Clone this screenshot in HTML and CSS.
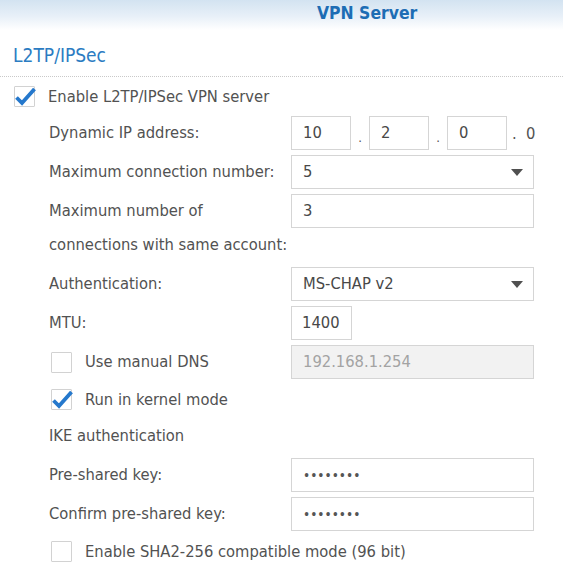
FILE: index.html
```html
<!DOCTYPE html>
<html>
<head>
<meta charset="utf-8">
<title>VPN Server</title>
<link rel="stylesheet" href="styles.css">
</head>
<body>
<div class="header">VPN Server</div>
<div class="section-title">L2TP/IPSec</div>
<div class="form">
  <div class="row row-check row-top">
    <span class="checkbox checked"><svg viewBox="0 0 21 21" class="tick"><path d="M2.5 11.5 L8 17 L20.5 3" /></svg></span>
    <span class="check-label">Enable L2TP/IPSec VPN server</span>
  </div>

  <div class="row row-field">
    <div class="label">Dynamic IP address:</div>
    <div class="ip">
      <div class="box box-ip">10</div><span class="ip-dot">.</span>
      <div class="box box-ip">2</div><span class="ip-dot">.</span>
      <div class="box box-ip">0</div><span class="ip-tail">.&nbsp;&nbsp;0</span>
    </div>
  </div>

  <div class="row row-field">
    <div class="label">Maximum connection number:</div>
    <div class="box box-wide select"><span>5</span><span class="arrow"></span></div>
  </div>

  <div class="row row-field row-tall">
    <div class="label label-wrap">Maximum number of<br>connections with same account:</div>
    <div class="box box-wide">3</div>
  </div>

  <div class="row row-field">
    <div class="label">Authentication:</div>
    <div class="box box-wide select"><span>MS-CHAP v2</span><span class="arrow"></span></div>
  </div>

  <div class="row row-field">
    <div class="label">MTU:</div>
    <div class="box box-mtu">1400</div>
  </div>

  <div class="row row-field">
    <div class="label label-check">
      <span class="checkbox"></span>
      <span class="check-label">Use manual DNS</span>
    </div>
    <div class="box box-wide disabled">192.168.1.254</div>
  </div>

  <div class="row row-check row-sub">
    <span class="checkbox checked"><svg viewBox="0 0 21 21" class="tick"><path d="M2.5 11.5 L8 17 L20.5 3" /></svg></span>
    <span class="check-label">Run in kernel mode</span>
  </div>

  <div class="row row-field">
    <div class="label">IKE authentication</div>
  </div>

  <div class="row row-field">
    <div class="label">Pre-shared key:</div>
    <div class="box box-wide"><span class="dots">••••••••</span></div>
  </div>

  <div class="row row-field">
    <div class="label">Confirm pre-shared key:</div>
    <div class="box box-wide"><span class="dots">••••••••</span></div>
  </div>

  <div class="row row-check row-sub">
    <span class="checkbox"></span>
    <span class="check-label">Enable SHA2-256 compatible mode (96 bit)</span>
  </div>
</div>
</body>
</html>
```
FILE: styles.css
```css
html, body {
  margin: 0;
  padding: 0;
  background: #ffffff;
}

body {
  width: 563px;
  height: 580px;
  overflow: hidden;
  font-family: "DejaVu Sans Condensed", "DejaVu Sans", sans-serif;
  font-stretch: condensed;
  font-size: 16.4px;
  color: #525252;
}

.header {
  height: 30px;
  box-sizing: border-box;
  padding-left: 317px;
  padding-top: 3px;
  line-height: 20px;
  font-weight: bold;
  font-size: 17.4px;
  color: #1d6db4;
  background: linear-gradient(to bottom, #d3e3f1 0%, #e8f0f8 55%, #ffffff 100%);
}

.section-title {
  height: 47px;
  box-sizing: border-box;
  padding-left: 13px;
  padding-top: 13px;
  line-height: 24px;
  font-size: 19px;
  color: #2b7cc2;
  border-bottom: 1px dotted #c9c9c9;
}

.form {
  display: flex;
  flex-direction: column;
  gap: 5px;
  padding-top: 4px;
}

.row {
  display: flex;
  align-items: center;
}

.row-check {
  height: 30px;
}

.row-top {
  padding-left: 14px;
}

.row-sub {
  padding-left: 51px;
}

.row-field {
  height: 34px;
  padding-left: 49px;
}

.row-tall {
  height: 68px;
  align-items: flex-start;
}

.label {
  width: 242px;
  flex: none;
  line-height: 34px;
  white-space: nowrap;
}

.label-check {
  display: flex;
  align-items: center;
  padding-left: 2px;
  box-sizing: border-box;
}

.checkbox {
  position: relative;
  flex: none;
  width: 21px;
  height: 21px;
  box-sizing: border-box;
  border: 1px solid #d2d2d2;
  border-radius: 1px;
  background: #ffffff;
}

.tick {
  position: absolute;
  left: -1px;
  top: -1px;
  width: 21px;
  height: 21px;
  overflow: visible;
}

.tick path {
  fill: none;
  stroke: #2578cc;
  stroke-width: 3.8;
  stroke-linecap: butt;
  stroke-linejoin: miter;
}

.check-label {
  margin-left: 13px;
  white-space: nowrap;
}

.box {
  height: 34px;
  box-sizing: border-box;
  border: 1px solid #d5d5d5;
  background: #ffffff;
  padding-left: 11px;
  line-height: 32px;
  color: #484848;
  white-space: nowrap;
}

.box-wide {
  width: 243px;
}

.box-mtu {
  width: 61px;
  padding-left: 10px;
}

.ip {
  display: flex;
  align-items: center;
}

.box-ip {
  width: 60px;
}

.ip-dot {
  width: 18px;
  text-align: center;
  padding-top: 8px;
  font-size: 13px;
}

.ip-tail {
  padding-left: 5px;
}

.select {
  display: flex;
  align-items: center;
  justify-content: space-between;
  padding-right: 10px;
}

.arrow {
  width: 0;
  height: 0;
  border-left: 6px solid transparent;
  border-right: 6px solid transparent;
  border-top: 7px solid #505050;
}

.disabled {
  background: #f2f2f2;
  color: #a3a3a3;
}

.dots {
  font-size: 13.5px;
  letter-spacing: 0;
  color: #555555;
}
```
